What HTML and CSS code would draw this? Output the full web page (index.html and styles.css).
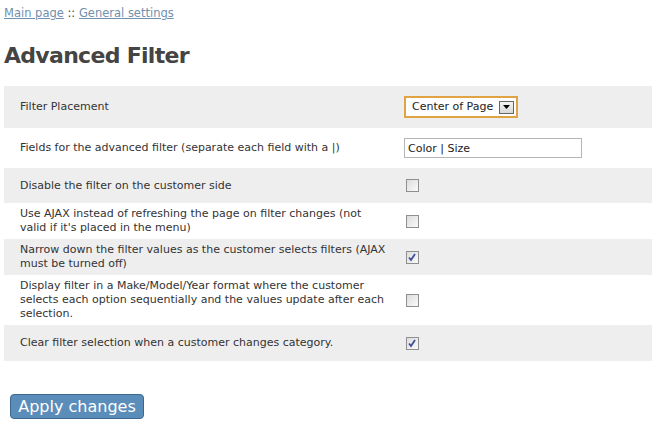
FILE: index.html
```html
<!DOCTYPE html>
<html>
<head>
<meta charset="utf-8">
<link rel="stylesheet" href="styles.css">
</head>
<body>
<div class="crumbs"><a href="#">Main page</a> :: <a href="#">General settings</a></div>
<h1 class="title">Advanced Filter</h1>
<table class="settings">
  <tr class="odd r1">
    <td class="label">Filter Placement</td>
    <td class="ctl">
      <div class="select"><span class="select-text">Center of Page</span><span class="select-btn"><svg width="9" height="5" viewBox="0 0 9 5"><path d="M1 0h7L4.5 4z" fill="#000"/></svg></span></div>
    </td>
  </tr>
  <tr class="r2">
    <td class="label">Fields for the advanced filter (separate each field with a |)</td>
    <td class="ctl"><input class="text" type="text" value="Color | Size"></td>
  </tr>
  <tr class="odd r3">
    <td class="label">Disable the filter on the customer side</td>
    <td class="ctl"><span class="cb"></span></td>
  </tr>
  <tr class="r4">
    <td class="label">Use AJAX instead of refreshing the page on filter changes (not valid if it's placed in the menu)</td>
    <td class="ctl"><span class="cb"></span></td>
  </tr>
  <tr class="odd r5">
    <td class="label">Narrow down the filter values as the customer selects filters (AJAX must be turned off)</td>
    <td class="ctl"><span class="cb on"><svg width="11" height="11" viewBox="0 0 11 11"><path d="M2 5.5l2 2.5 4-6" fill="none" stroke="#3b4f9a" stroke-width="1.8"/></svg></span></td>
  </tr>
  <tr class="r6">
    <td class="label">Display filter in a Make/Model/Year format where the customer selects each option sequentially and the values update after each selection.</td>
    <td class="ctl"><span class="cb"></span></td>
  </tr>
  <tr class="odd r7">
    <td class="label">Clear filter selection when a customer changes category.</td>
    <td class="ctl"><span class="cb on"><svg width="11" height="11" viewBox="0 0 11 11"><path d="M2 5.5l2 2.5 4-6" fill="none" stroke="#3b4f9a" stroke-width="1.8"/></svg></span></td>
  </tr>
</table>
<div class="actions"><button class="apply">Apply changes</button></div>
</body>
</html>
```
FILE: styles.css
```css
html, body { margin: 0; padding: 0; background: #fff; }
body {
  padding: 5px 4px 0 4px;
  font-family: "DejaVu Sans", Verdana, sans-serif;
  font-size: 11px;
  color: #333;
}
.crumbs { height: 16px; line-height: 16px; color: #444; font-size: 11.5px; }
.crumbs a { color: #7190ad; text-decoration: underline; }
.title {
  margin: 22px 0 0 0;
  height: 43px;
  font-family: "DejaVu Sans", Verdana, sans-serif;
  font-size: 22px;
  letter-spacing: -0.7px;
  line-height: 26px;
  font-weight: bold;
  color: #444;
}
.settings { border-collapse: collapse; width: 648px; }
.settings td { padding: 4px 0; line-height: 14px; vertical-align: middle; }
.settings .label { width: 368px; padding-left: 16px; padding-right: 16px; }
.settings .ctl { padding-left: 0; }
.odd td { background: #eeeeee; }
.r1 td { height: 34px; }
.r2 td { height: 32px; }
.r3 td { height: 27px; }
.r4 td { height: 28px; }
.r5 td { height: 28px; }
.r6 td { height: 42px; }
.r7 td { height: 28px; }
.select {
  display: flex; align-items: center; justify-content: space-between;
  height: 18px; border: 2px solid #e0a445; background: #fff;
  padding: 0 2px 0 6px; box-sizing: content-box; width: 102px;
}
.select-text { font-size: 11px; color: #222; }
.select-btn {
  display: flex; align-items: center; justify-content: center;
  width: 13px; height: 11px; border: 1px solid #666; background: linear-gradient(#f4f4f4, #d8d8d8);
}
.text {
  display: block; width: 178px; height: 20px; box-sizing: border-box;
  border: 1px solid #b5b5b5; padding: 0 3px; margin: 0;
  font-family: "DejaVu Sans", Verdana, sans-serif; font-size: 11px; color: #222;
}
.cb {
  display: flex; align-items: center; justify-content: center;
  width: 13px; height: 13px; box-sizing: border-box; margin-left: 2px;
  border: 1px solid #8f8f8f; background: linear-gradient(135deg, #dcdcdc, #fafafa);
}
.actions { padding: 33px 0 0 6px; }
.apply {
  width: 134px; height: 25px; padding: 0; margin: 0;
  background: #5a8db9; border: 1px solid #3c6890; border-radius: 4px;
  color: #fff; font-family: "DejaVu Sans", Verdana, sans-serif; font-size: 16px;
}
```
